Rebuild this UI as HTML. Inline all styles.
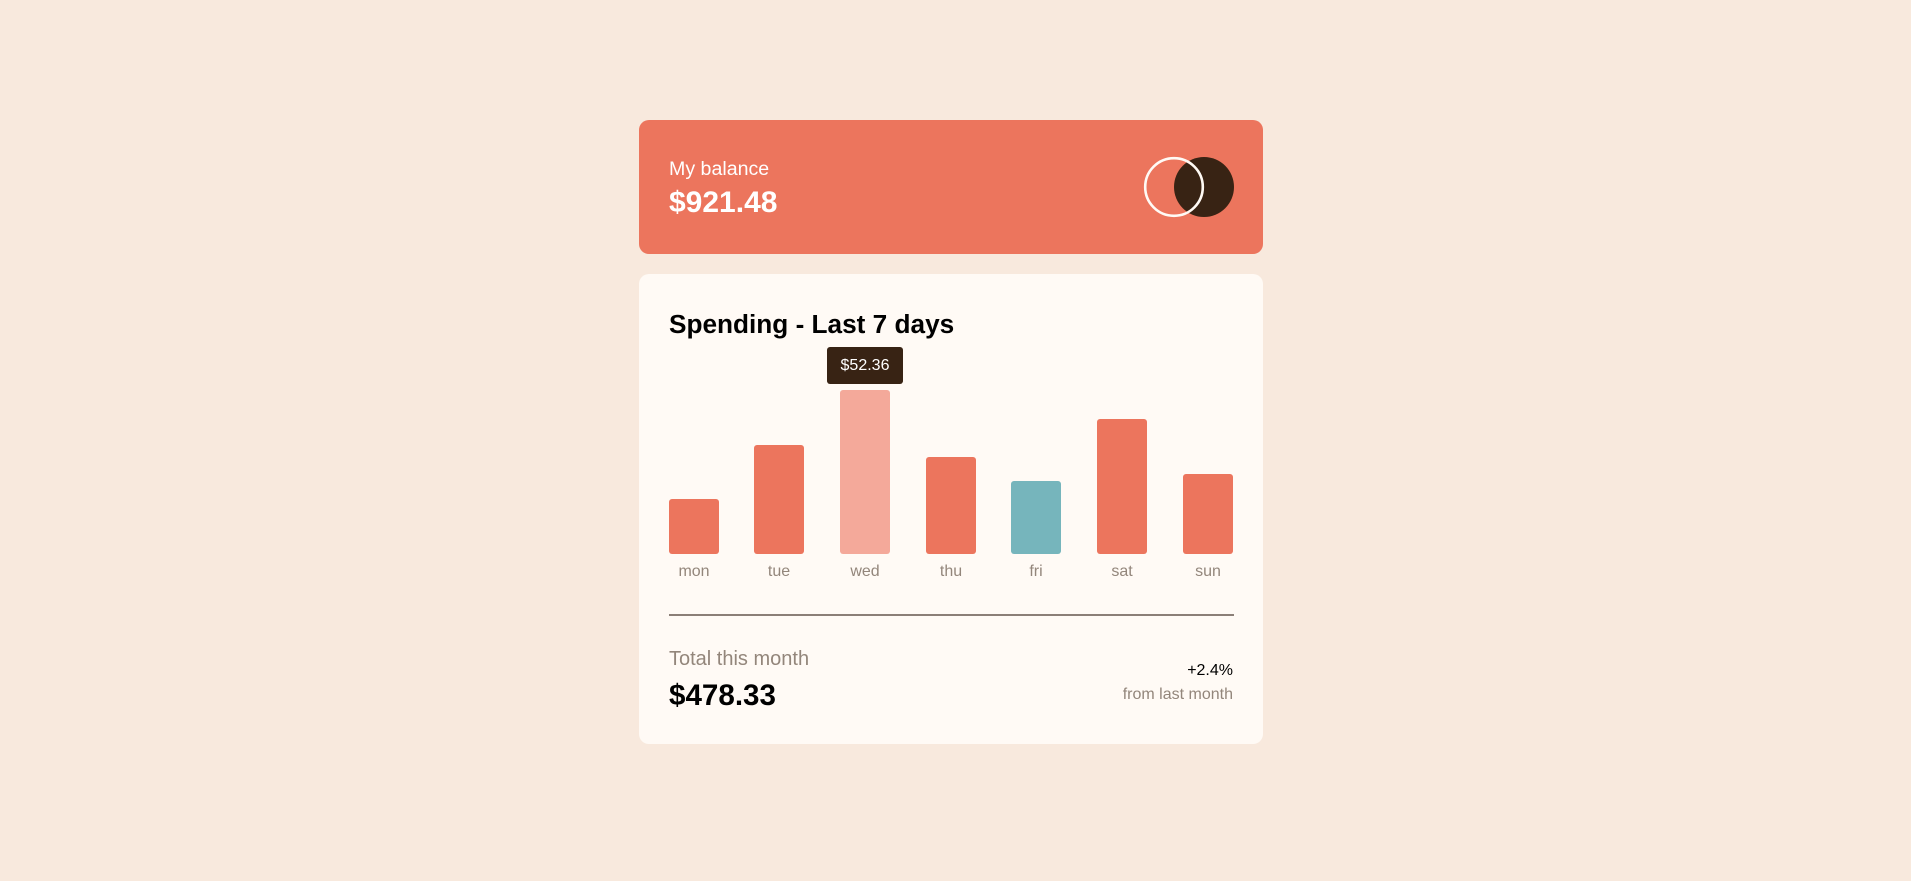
<!DOCTYPE html>
<html><head><meta charset="utf-8"><style>
*{margin:0;padding:0;box-sizing:border-box}
body{width:1911px;height:881px;background:#f8e9dd;font-family:"Liberation Sans",sans-serif;position:relative;overflow:hidden}
.a{position:absolute;white-space:nowrap}
.card1{left:639px;top:120px;width:624px;height:134px;background:#ec755d;border-radius:10px}
.card2{left:639px;top:274px;width:624px;height:470px;background:#fffaf5;border-radius:10px}
.bar{position:absolute;width:50px;background:#ec755d;border-radius:3px}
.lbl{position:absolute;width:86px;text-align:center;font-size:16px;color:#93867b;top:563px}
</style></head><body>
<div class="a card1"></div>
<div class="a" style="left:669px;top:157px;font-size:19.6px;color:#fff;line-height:24px">My balance</div>
<div class="a" style="left:669px;top:187px;font-size:30px;font-weight:bold;color:#fff;line-height:32px">$921.48</div>
<svg class="a" style="left:1140px;top:153px" width="100" height="70">
<circle cx="64" cy="34" r="30" fill="#382314"/>
<circle cx="34" cy="34" r="28.8" fill="none" stroke="#fffaf5" stroke-width="2.6"/>
</svg>
<div class="a card2"></div>
<div class="a" style="left:669px;top:309px;font-size:26.2px;font-weight:bold;color:#000;line-height:30px">Spending - Last 7 days</div>
<div class="a" style="left:827px;top:347px;width:76px;height:37px;background:#382314;border-radius:3px;color:#fff;font-size:16px;line-height:37px;text-align:center">$52.36</div>
<div class="bar" style="left:669px;height:55px;top:499px"></div>
<div class="bar" style="left:754px;height:109px;top:445px"></div>
<div class="bar" style="left:840px;height:164px;top:390px;background:#f4a99a"></div>
<div class="bar" style="left:926px;height:97px;top:457px"></div>
<div class="bar" style="left:1011px;height:73px;top:481px;background:#76b5bc"></div>
<div class="bar" style="left:1097px;height:135px;top:419px"></div>
<div class="bar" style="left:1183px;height:80px;top:474px"></div>
<div class="lbl" style="left:651px">mon</div>
<div class="lbl" style="left:736px">tue</div>
<div class="lbl" style="left:822px">wed</div>
<div class="lbl" style="left:908px">thu</div>
<div class="lbl" style="left:993px">fri</div>
<div class="lbl" style="left:1079px">sat</div>
<div class="lbl" style="left:1165px">sun</div>
<div class="a" style="left:669px;top:614px;width:565px;height:2px;background:#8b7f77"></div>
<div class="a" style="left:669px;top:647px;font-size:20px;color:#93867b;line-height:24px">Total this month</div>
<div class="a" style="left:669px;top:679px;font-size:29.6px;font-weight:bold;color:#000;line-height:34px">$478.33</div>
<div class="a" style="right:678px;top:662px;font-size:16px;color:#000;line-height:18px;text-align:right">+2.4%</div>
<div class="a" style="right:678px;top:686px;font-size:16px;color:#93867b;line-height:18px;text-align:right">from last month</div>
</body></html>
